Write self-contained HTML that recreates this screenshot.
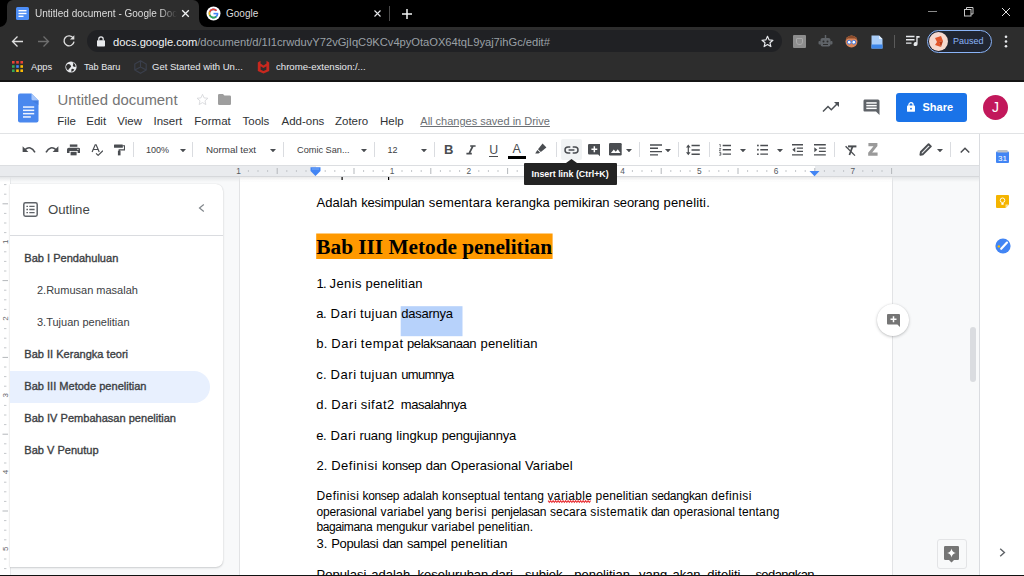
<!DOCTYPE html>
<html>
<head>
<meta charset="utf-8">
<style>
*{box-sizing:border-box;margin:0;padding:0}
html,body{width:1024px;height:576px;overflow:hidden;background:#fff;font-family:"Liberation Sans",sans-serif;}
.abs{position:absolute}
#root{position:relative;width:1024px;height:576px;overflow:hidden;background:#f8f9fa}
/* chrome */
#tabbar{left:0;top:0;width:1024px;height:27px;background:#000}
#tab1{left:7px;top:0;width:192px;height:27px;background:#2d2d2d;border-radius:6px 6px 0 0}
#navbar{left:0;top:27px;width:1024px;height:29px;background:#2d2d2d}
#bm{left:0;top:56px;width:1024px;height:25px;background:#2d2d2d}
#sep{left:0;top:80.4px;width:1024px;height:1.6px;background:#141414}
#pill{left:87px;top:30.3px;width:695px;height:22.2px;border-radius:11px;background:#202124}
.ct{color:#e8eaed;font-size:11px;white-space:nowrap;line-height:14px}
/* docs header */
#hdr{left:0;top:82px;width:1024px;height:52px;background:#fff}
#tb{left:0;top:133px;width:979px;height:32px;background:#fff;border-top:1px solid #e3e4e6}
.menu{color:#2f3235;font-size:11.5px;white-space:nowrap;line-height:14px;top:114px}
.tbt{color:#3c4043;font-size:9.5px;white-space:nowrap;line-height:12px;top:144px}
/* ruler */
#ruler{left:0;top:165px;width:979px;height:12px;background:#e9ebee;border-top:1px solid #dcdee1;border-bottom:1px solid #d6d8db}
/* doc */
#docbg{left:0;top:177px;width:979px;height:399px;background:#f8f9fa}
#page{left:239px;top:177px;width:654px;height:399px;background:#fff;border-left:1px solid #e2e3e5;border-right:1px solid #e2e3e5}
.dl{color:#000;white-space:nowrap;font-size:12.5px;line-height:16px;left:316px;transform-origin:0 0}
/* sidebar right */
#rside{left:979px;top:134px;width:45px;height:442px;background:#fff;border-left:1px solid #dadce0}
/* outline */
#outline{left:10px;top:183.5px;width:212.5px;height:383.5px;background:#fff;border-radius:0 7px 7px 0;box-shadow:0 1px 2px rgba(60,64,67,.22),0 0 1px rgba(60,64,67,.2)}
.ol{color:#3c4043;font-size:11.05px;white-space:nowrap;line-height:14px;-webkit-text-stroke:0.35px #3c4043}
.ol2{color:#3c4043;font-size:11px;white-space:nowrap;line-height:14px}
</style>
</head>
<body>
<div id="root">
<!-- CHROME -->
<div id="tabbar" class="abs"></div>
<div id="tab1" class="abs"></div>
<div id="navbar" class="abs"></div>
<div id="bm" class="abs"></div>
<div id="sep" class="abs"></div>
<div id="pill" class="abs"></div>

<!-- tab feet -->
<svg class="abs" style="left:-1px;top:19px" width="8" height="8"><path d="M0 8 H8 V0 A8 8 0 0 1 0 8Z" fill="#2d2d2d"/></svg>
<svg class="abs" style="left:199px;top:19px" width="8" height="8"><path d="M8 8 H0 V0 A8 8 0 0 0 8 8Z" fill="#2d2d2d"/></svg>
<!-- docs favicon -->
<svg class="abs" style="left:16px;top:7px" width="13" height="13" viewBox="0 0 13 13"><rect width="13" height="13" rx="1.5" fill="#4c8df6"/><rect x="2.5" y="3" width="8" height="1.4" fill="#fff"/><rect x="2.5" y="5.8" width="8" height="1.4" fill="#fff"/><rect x="2.5" y="8.6" width="5" height="1.4" fill="#fff"/></svg>
<div class="abs ct" style="left:35px;top:7px;color:#dcdcdc;font-size:10px;width:142px;overflow:hidden;-webkit-mask-image:linear-gradient(90deg,#000 125px,transparent 142px)">Untitled document - Google Docs</div>
<svg class="abs" style="left:181px;top:9px" width="9" height="9" viewBox="0 0 9 9"><path d="M1.2 1.2 L7.8 7.8 M7.8 1.2 L1.2 7.8" stroke="#f1f3f4" stroke-width="1.3" fill="none"/></svg>
<!-- google tab -->
<svg class="abs" style="left:206px;top:6px" width="15" height="15" viewBox="0 0 15 15"><circle cx="7.5" cy="7.5" r="7" fill="#fff"/><path d="M11.6 7.6 A4.1 4.1 0 1 1 10.4 4.6" fill="none" stroke="#4285f4" stroke-width="1.7"/><path d="M3.7 9.3 A4.1 4.1 0 0 1 3.7 5.7" fill="none" stroke="#fbbc05" stroke-width="1.7"/><path d="M3.7 5.8 A4.1 4.1 0 0 1 10.5 4.7" fill="none" stroke="#ea4335" stroke-width="1.7"/><path d="M3.7 9.2 A4.1 4.1 0 0 0 10.2 10.6" fill="none" stroke="#34a853" stroke-width="1.7"/><rect x="7.5" y="6.8" width="4.6" height="1.6" fill="#4285f4"/></svg>
<div class="abs ct" style="left:226px;top:7px;font-size:10px;color:#dcdcdc">Google</div>
<svg class="abs" style="left:373px;top:9px" width="9" height="9" viewBox="0 0 9 9"><path d="M1.5 1.5 L7.5 7.5 M7.5 1.5 L1.5 7.5" stroke="#e8eaed" stroke-width="1.1" fill="none"/></svg>
<div class="abs" style="left:389px;top:6px;width:1px;height:15px;background:#4a4a4a"></div>
<svg class="abs" style="left:401px;top:8px" width="12" height="12" viewBox="0 0 12 12"><path d="M6 1 V11 M1 6 H11" stroke="#f1f3f4" stroke-width="1.5" fill="none"/></svg>
<!-- window controls -->
<div class="abs" style="left:928px;top:11px;width:9px;height:1px;background:#8a8a8a"></div>
<svg class="abs" style="left:964px;top:7px" width="10" height="10" viewBox="0 0 10 10"><rect x="0.5" y="2.5" width="6.5" height="6.5" fill="none" stroke="#c8c8c8" stroke-width="1"/><path d="M2.5 2.5 V0.5 H9 V7 H7" fill="none" stroke="#c8c8c8" stroke-width="1"/></svg>
<svg class="abs" style="left:1001px;top:7px" width="10" height="10" viewBox="0 0 10 10"><path d="M1 1 L9 9 M9 1 L1 9" stroke="#e0e0e0" stroke-width="1" fill="none"/></svg>
<!-- nav icons -->
<svg class="abs" style="left:11px;top:35px" width="13" height="13" viewBox="0 0 13 13"><path d="M12 6.5 H1.8 M6.5 1.5 L1.5 6.5 L6.5 11.5" stroke="#dedede" stroke-width="1.3" fill="none"/></svg>
<svg class="abs" style="left:37px;top:35px" width="13" height="13" viewBox="0 0 13 13"><path d="M1 6.5 H11.2 M6.5 1.5 L11.5 6.5 L6.5 11.5" stroke="#6e6e6e" stroke-width="1.3" fill="none"/></svg>
<svg class="abs" style="left:62px;top:34px" width="14" height="14" viewBox="0 0 14 14"><path d="M11.3 4.2 A5 5 0 1 0 12 7.6" stroke="#dedede" stroke-width="1.4" fill="none"/><path d="M12.3 1.2 V5.6 H7.9 Z" fill="#dedede"/></svg>
<!-- lock -->
<svg class="abs" style="left:97px;top:36px" width="8" height="11" viewBox="0 0 8 11"><rect x="0" y="4.2" width="8" height="6.3" rx="0.8" fill="#e8eaed"/><path d="M1.8 4.5 V3 A2.2 2.2 0 0 1 6.2 3 V4.5" stroke="#e8eaed" stroke-width="1.2" fill="none"/></svg>
<div class="abs" style="left:113px;top:35px;font-size:11.2px;line-height:15px;white-space:nowrap;color:#f1f3f4;letter-spacing:-0.02px">docs.google.com<span style="color:#9aa0a6;letter-spacing:-0.03px">/document/d/1I1crwduvY72vGjIqC9KCv4pyOtaOX64tqL9yaj7ihGc/edit#</span></div>
<!-- star -->
<svg class="abs" style="left:761px;top:35px" width="13" height="13" viewBox="0 0 24 24"><path d="M12 2.5 L14.9 9 L22 9.7 L16.6 14.4 L18.2 21.4 L12 17.7 L5.8 21.4 L7.4 14.4 L2 9.7 L9.1 9 Z" fill="none" stroke="#e8eaed" stroke-width="2.2" stroke-linejoin="round"/></svg>
<!-- ext icons -->
<div class="abs" style="left:793px;top:35px;width:13px;height:13px;background:#8d8d8d;border-radius:1px"></div>
<div class="abs" style="left:796px;top:38px;width:7px;height:7px;border:1px solid #a9a9a9;border-radius:1px 1px 3px 3px"></div>
<svg class="abs" style="left:818px;top:34px" width="15" height="15" viewBox="0 0 15 15"><rect x="2.5" y="4" width="10" height="8.5" rx="2" fill="#5f6368"/><rect x="6.8" y="1" width="1.4" height="3.4" fill="#5f6368"/><rect x="0.5" y="7" width="2.4" height="3.5" rx="1" fill="#5f6368"/><rect x="12.1" y="7" width="2.4" height="3.5" rx="1" fill="#5f6368"/><circle cx="5.5" cy="7.5" r="1" fill="#2d2d2d"/><circle cx="9.5" cy="7.5" r="1" fill="#2d2d2d"/><rect x="5" y="10" width="5" height="1" fill="#2d2d2d"/></svg>
<svg class="abs" style="left:845px;top:35px" width="13" height="13" viewBox="0 0 13 13"><circle cx="6.5" cy="6.5" r="6" fill="#d9865a"/><path d="M0.8 5 A6 6 0 0 1 12.2 5 L10 3.5 H3Z" fill="#8a4b2b"/><circle cx="4.2" cy="7.2" r="1.9" fill="#fff" stroke="#3b74e0" stroke-width="1"/><circle cx="8.8" cy="7.2" r="1.9" fill="#fff" stroke="#3b74e0" stroke-width="1"/></svg>
<svg class="abs" style="left:871px;top:35px" width="12" height="14" viewBox="0 0 12 14"><path d="M0.5 0.5 H8 L11.5 4 V13.5 H0.5Z" fill="#a9cdf8"/><path d="M8 0.5 L11.5 4 H8Z" fill="#e3f0ff"/><rect x="0.5" y="9.5" width="11" height="4" fill="#3d86e8"/></svg>
<div class="abs" style="left:894px;top:35px;width:1px;height:13px;background:#5a5a5a"></div>
<svg class="abs" style="left:906px;top:35px" width="14" height="12" viewBox="0 0 14 12"><path d="M0 1.5 H8.5 M0 4.8 H8.5 M0 8.1 H5.5" stroke="#e8eaed" stroke-width="1.4" fill="none"/><path d="M10.3 1 H13.6 V2.8 H11.6 V9 A2 2 0 1 1 10.3 7.2Z" fill="#e8eaed"/></svg>
<!-- paused -->
<div class="abs" style="left:927px;top:30px;width:65px;height:23px;border-radius:12px;border:1px solid #8ab4f8;background:#202531"></div>
<div class="abs" style="left:929px;top:32px;width:19px;height:19px;border-radius:50%;background:#f6d9cf;overflow:hidden"><svg width="19" height="19" viewBox="0 0 19 19"><path d="M6 6 L12 4 L14 9 L10 10 L12 15 L6 13 L8 10Z" fill="#e2562c"/><path d="M10 10 L14 9 L12 15Z" fill="#b83a17"/></svg></div>
<div class="abs" style="left:953px;top:35px;font-size:9px;line-height:12px;color:#8ab4f8;white-space:nowrap">Paused</div>
<svg class="abs" style="left:1004px;top:35px" width="4" height="13" viewBox="0 0 4 13"><circle cx="2" cy="1.8" r="1.3" fill="#e8eaed"/><circle cx="2" cy="6.5" r="1.3" fill="#e8eaed"/><circle cx="2" cy="11.2" r="1.3" fill="#e8eaed"/></svg>
<!-- bookmarks -->
<svg class="abs" style="left:12px;top:61px" width="11" height="11" viewBox="0 0 11 11"><rect x="0" y="0" width="2.6" height="2.6" fill="#ea4335"/><rect x="4.2" y="0" width="2.6" height="2.6" fill="#ea4335"/><rect x="8.4" y="0" width="2.6" height="2.6" fill="#ea4335"/><rect x="0" y="4.2" width="2.6" height="2.6" fill="#34a853"/><rect x="4.2" y="4.2" width="2.6" height="2.6" fill="#4285f4"/><rect x="8.4" y="4.2" width="2.6" height="2.6" fill="#fbbc05"/><rect x="0" y="8.4" width="2.6" height="2.6" fill="#34a853"/><rect x="4.2" y="8.4" width="2.6" height="2.6" fill="#fbbc05"/><rect x="8.4" y="8.4" width="2.6" height="2.6" fill="#fbbc05"/></svg>
<div class="abs ct" style="left:31px;top:60px;font-size:9.3px">Apps</div>
<svg class="abs" style="left:65px;top:61px" width="12" height="12" viewBox="0 0 12 12"><circle cx="6" cy="6" r="5.6" fill="#e8eaed"/><path d="M2 3.5 Q4 2.5 5.5 4 T5 7 Q3.5 7.5 3.2 9.5 Q1 8 1 5.5Z M7.5 1 Q9 2.5 8 4 T10.5 6 Q10.8 3 7.5 1Z M6.5 8 Q8 7.5 9.3 8.8 Q8 10.6 6.2 10.8Z" fill="#2d2d2d"/></svg>
<div class="abs ct" style="left:84px;top:60px;font-size:9.1px">Tab Baru</div>
<svg class="abs" style="left:134px;top:60px" width="13" height="14" viewBox="0 0 13 14"><path d="M6.5 0.8 L12.2 4 V10 L6.5 13.2 L0.8 10 V4Z M6.5 0.8 V7 M0.8 10 L6.5 7 L12.2 10" fill="none" stroke="#3a3f4c" stroke-width="1.2"/></svg>
<div class="abs ct" style="left:152px;top:60px;font-size:9.5px">Get Started with Un...</div>
<svg class="abs" style="left:257px;top:60px" width="13" height="14" viewBox="0 0 13 14"><path d="M0.8 2.5 L3.5 0.8 V3.6 L6.5 5.4 L9.5 3.6 V0.8 L12.2 2.5 V11 L6.5 13.4 L0.8 11Z M3.6 6.2 V9.8 L6.5 11 L9.4 9.8 V6.2 L6.5 8Z" fill="#c8281e" fill-rule="evenodd"/></svg>
<div class="abs ct" style="left:276px;top:60px;font-size:9.6px">chrome-extension:/...</div>
<!-- DOCS -->
<div id="hdr" class="abs"></div>
<div id="tb" class="abs"></div>
<div id="ruler" class="abs"></div>
<div id="docbg" class="abs"></div>
<div id="page" class="abs"></div>
<div class="abs" style="left:316px;top:166px;width:499px;height:10px;background:#fff"></div>
<svg class="abs" style="left:0;top:0" width="1024" height="180" viewBox="0 0 1024 180"><text x="238.5" y="173.8" font-size="8.3" fill="#55595e" text-anchor="middle" font-family="Liberation Sans">1</text><rect x="247.9" y="170" width="1" height="2" fill="#c4c7ca"/><rect x="257.5" y="170" width="1" height="2" fill="#c4c7ca"/><rect x="267.1" y="170" width="1" height="2" fill="#c4c7ca"/><rect x="276.7" y="168" width="1" height="6" fill="#b4b7bb"/><rect x="286.3" y="170" width="1" height="2" fill="#c4c7ca"/><rect x="295.9" y="170" width="1" height="2" fill="#c4c7ca"/><rect x="305.5" y="170" width="1" height="2" fill="#c4c7ca"/><rect x="324.7" y="170" width="1" height="2" fill="#c4c7ca"/><rect x="334.3" y="170" width="1" height="2" fill="#c4c7ca"/><rect x="343.9" y="170" width="1" height="2" fill="#c4c7ca"/><rect x="353.5" y="168" width="1" height="6" fill="#b4b7bb"/><rect x="363.1" y="170" width="1" height="2" fill="#c4c7ca"/><rect x="372.7" y="170" width="1" height="2" fill="#c4c7ca"/><rect x="382.3" y="170" width="1" height="2" fill="#c4c7ca"/><text x="392.1" y="173.8" font-size="8.3" fill="#55595e" text-anchor="middle" font-family="Liberation Sans">1</text><rect x="401.5" y="170" width="1" height="2" fill="#c4c7ca"/><rect x="411.1" y="170" width="1" height="2" fill="#c4c7ca"/><rect x="420.7" y="170" width="1" height="2" fill="#c4c7ca"/><rect x="430.3" y="168" width="1" height="6" fill="#b4b7bb"/><rect x="439.9" y="170" width="1" height="2" fill="#c4c7ca"/><rect x="449.5" y="170" width="1" height="2" fill="#c4c7ca"/><rect x="459.1" y="170" width="1" height="2" fill="#c4c7ca"/><text x="468.9" y="173.8" font-size="8.3" fill="#55595e" text-anchor="middle" font-family="Liberation Sans">2</text><rect x="478.3" y="170" width="1" height="2" fill="#c4c7ca"/><rect x="487.9" y="170" width="1" height="2" fill="#c4c7ca"/><rect x="497.5" y="170" width="1" height="2" fill="#c4c7ca"/><rect x="507.1" y="168" width="1" height="6" fill="#b4b7bb"/><rect x="516.7" y="170" width="1" height="2" fill="#c4c7ca"/><rect x="526.3" y="170" width="1" height="2" fill="#c4c7ca"/><rect x="535.9" y="170" width="1" height="2" fill="#c4c7ca"/><text x="545.7" y="173.8" font-size="8.3" fill="#55595e" text-anchor="middle" font-family="Liberation Sans">3</text><rect x="555.1" y="170" width="1" height="2" fill="#c4c7ca"/><rect x="564.7" y="170" width="1" height="2" fill="#c4c7ca"/><rect x="574.3" y="170" width="1" height="2" fill="#c4c7ca"/><rect x="583.9" y="168" width="1" height="6" fill="#b4b7bb"/><rect x="593.5" y="170" width="1" height="2" fill="#c4c7ca"/><rect x="603.1" y="170" width="1" height="2" fill="#c4c7ca"/><rect x="612.7" y="170" width="1" height="2" fill="#c4c7ca"/><text x="622.5" y="173.8" font-size="8.3" fill="#55595e" text-anchor="middle" font-family="Liberation Sans">4</text><rect x="631.9" y="170" width="1" height="2" fill="#c4c7ca"/><rect x="641.5" y="170" width="1" height="2" fill="#c4c7ca"/><rect x="651.1" y="170" width="1" height="2" fill="#c4c7ca"/><rect x="660.7" y="168" width="1" height="6" fill="#b4b7bb"/><rect x="670.3" y="170" width="1" height="2" fill="#c4c7ca"/><rect x="679.9" y="170" width="1" height="2" fill="#c4c7ca"/><rect x="689.5" y="170" width="1" height="2" fill="#c4c7ca"/><text x="699.3" y="173.8" font-size="8.3" fill="#55595e" text-anchor="middle" font-family="Liberation Sans">5</text><rect x="708.7" y="170" width="1" height="2" fill="#c4c7ca"/><rect x="718.3" y="170" width="1" height="2" fill="#c4c7ca"/><rect x="727.9" y="170" width="1" height="2" fill="#c4c7ca"/><rect x="737.5" y="168" width="1" height="6" fill="#b4b7bb"/><rect x="747.1" y="170" width="1" height="2" fill="#c4c7ca"/><rect x="756.7" y="170" width="1" height="2" fill="#c4c7ca"/><rect x="766.3" y="170" width="1" height="2" fill="#c4c7ca"/><text x="776.1" y="173.8" font-size="8.3" fill="#55595e" text-anchor="middle" font-family="Liberation Sans">6</text><rect x="785.5" y="170" width="1" height="2" fill="#c4c7ca"/><rect x="795.1" y="170" width="1" height="2" fill="#c4c7ca"/><rect x="804.7" y="170" width="1" height="2" fill="#c4c7ca"/><rect x="814.3" y="168" width="1" height="6" fill="#b4b7bb"/><rect x="823.9" y="170" width="1" height="2" fill="#c4c7ca"/><rect x="833.5" y="170" width="1" height="2" fill="#c4c7ca"/><rect x="843.1" y="170" width="1" height="2" fill="#c4c7ca"/><text x="852.9" y="173.8" font-size="8.3" fill="#55595e" text-anchor="middle" font-family="Liberation Sans">7</text><rect x="862.3" y="170" width="1" height="2" fill="#c4c7ca"/><rect x="871.9" y="170" width="1" height="2" fill="#c4c7ca"/><rect x="881.5" y="170" width="1" height="2" fill="#c4c7ca"/><rect x="891.1" y="168" width="1" height="6" fill="#b4b7bb"/><path d="M310.5 167.2 H320.5 V171 L315.5 176 L310.5 171Z" fill="#4285f4"/><rect x="312" y="168.6" width="7" height="0.8" fill="#8ab4f8"/><path d="M809.5 171 H819.5 L814.5 176.2Z" fill="#4285f4"/></svg>
<div class="abs" style="left:0;top:177px;width:10px;height:399px;background:#fff"></div>
<svg class="abs" style="left:0;top:0.6px" width="12" height="576" viewBox="0 0 12 576"><rect x="4" y="183.1" width="2.4" height="1" fill="#c4c7ca"/><rect x="4" y="192.7" width="2.4" height="1" fill="#c4c7ca"/><rect x="2.5" y="202.3" width="5.5" height="1" fill="#b4b7bb"/><rect x="4" y="211.9" width="2.4" height="1" fill="#c4c7ca"/><rect x="4" y="221.5" width="2.4" height="1" fill="#c4c7ca"/><rect x="4" y="231.1" width="2.4" height="1" fill="#c4c7ca"/><text transform="translate(7.6,240.7) rotate(-90)" font-size="8" fill="#5f6368" text-anchor="middle" font-family="Liberation Sans">1</text><rect x="4" y="250.3" width="2.4" height="1" fill="#c4c7ca"/><rect x="4" y="259.9" width="2.4" height="1" fill="#c4c7ca"/><rect x="4" y="269.5" width="2.4" height="1" fill="#c4c7ca"/><rect x="2.5" y="279.1" width="5.5" height="1" fill="#b4b7bb"/><rect x="4" y="288.7" width="2.4" height="1" fill="#c4c7ca"/><rect x="4" y="298.3" width="2.4" height="1" fill="#c4c7ca"/><rect x="4" y="307.9" width="2.4" height="1" fill="#c4c7ca"/><text transform="translate(7.6,317.5) rotate(-90)" font-size="8" fill="#5f6368" text-anchor="middle" font-family="Liberation Sans">2</text><rect x="4" y="327.1" width="2.4" height="1" fill="#c4c7ca"/><rect x="4" y="336.7" width="2.4" height="1" fill="#c4c7ca"/><rect x="4" y="346.3" width="2.4" height="1" fill="#c4c7ca"/><rect x="2.5" y="355.9" width="5.5" height="1" fill="#b4b7bb"/><rect x="4" y="365.5" width="2.4" height="1" fill="#c4c7ca"/><rect x="4" y="375.1" width="2.4" height="1" fill="#c4c7ca"/><rect x="4" y="384.7" width="2.4" height="1" fill="#c4c7ca"/><text transform="translate(7.6,394.3) rotate(-90)" font-size="8" fill="#5f6368" text-anchor="middle" font-family="Liberation Sans">3</text><rect x="4" y="403.9" width="2.4" height="1" fill="#c4c7ca"/><rect x="4" y="413.5" width="2.4" height="1" fill="#c4c7ca"/><rect x="4" y="423.1" width="2.4" height="1" fill="#c4c7ca"/><rect x="2.5" y="432.7" width="5.5" height="1" fill="#b4b7bb"/><rect x="4" y="442.3" width="2.4" height="1" fill="#c4c7ca"/><rect x="4" y="451.9" width="2.4" height="1" fill="#c4c7ca"/><rect x="4" y="461.5" width="2.4" height="1" fill="#c4c7ca"/><text transform="translate(7.6,471.1) rotate(-90)" font-size="8" fill="#5f6368" text-anchor="middle" font-family="Liberation Sans">4</text><rect x="4" y="480.7" width="2.4" height="1" fill="#c4c7ca"/><rect x="4" y="490.3" width="2.4" height="1" fill="#c4c7ca"/><rect x="4" y="499.9" width="2.4" height="1" fill="#c4c7ca"/><rect x="2.5" y="509.5" width="5.5" height="1" fill="#b4b7bb"/><rect x="4" y="519.1" width="2.4" height="1" fill="#c4c7ca"/><rect x="4" y="528.7" width="2.4" height="1" fill="#c4c7ca"/><rect x="4" y="538.3" width="2.4" height="1" fill="#c4c7ca"/><text transform="translate(7.6,547.9) rotate(-90)" font-size="8" fill="#5f6368" text-anchor="middle" font-family="Liberation Sans">5</text><rect x="4" y="557.5" width="2.4" height="1" fill="#c4c7ca"/><rect x="4" y="567.1" width="2.4" height="1" fill="#c4c7ca"/></svg>
<div class="abs" style="left:10px;top:177px;width:1px;height:399px;background:#e6e8ea"></div>
<div id="rside" class="abs"></div>
<div class="abs" style="left:0;top:133px;width:1024px;height:1px;background:#e1e3e5"></div>
<!-- docs logo -->
<svg class="abs" style="left:18px;top:93px" width="21" height="30" viewBox="0 0 21 30"><path d="M2 0.5 H13.5 L20.5 7.5 V27.5 Q20.5 29.5 18.5 29.5 H2 Q0 29.5 0 27.5 V2.5 Q0 0.5 2 0.5Z" fill="#4a88ee"/><path d="M13.5 0.5 L20.5 7.5 H15 Q13.5 7.5 13.5 6Z" fill="#a8c7fa"/><path d="M13.5 7.5 H20.5 V12 Z" fill="#3f78d8" opacity=".6"/><rect x="5" y="13.3" width="11.2" height="1.5" fill="#f1f6ff"/><rect x="5" y="16.6" width="11.2" height="1.5" fill="#f1f6ff"/><rect x="5" y="19.9" width="11.2" height="1.5" fill="#f1f6ff"/><rect x="5" y="23.2" width="7.8" height="1.5" fill="#f1f6ff"/></svg>
<div class="abs" style="left:57.5px;top:90.5px;font-size:14.9px;line-height:18px;color:#757575;white-space:nowrap">Untitled document</div>
<svg class="abs" style="left:196px;top:93px" width="13" height="13" viewBox="0 0 24 24"><path d="M12 2.5 L14.9 9 L22 9.7 L16.6 14.4 L18.2 21.4 L12 17.7 L5.8 21.4 L7.4 14.4 L2 9.7 L9.1 9 Z" fill="none" stroke="#d5d7da" stroke-width="1.6" stroke-linejoin="round"/></svg>
<svg class="abs" style="left:218px;top:94px" width="13" height="11" viewBox="0 0 13 11"><path d="M0 1.2 Q0 0 1.2 0 H5 L6.4 1.5 H11.8 Q13 1.5 13 2.7 V9.8 Q13 11 11.8 11 H1.2 Q0 11 0 9.8Z" fill="#9e9e9e"/></svg>
<div class="abs menu" style="left:57.3px">File</div>
<div class="abs menu" style="left:86.3px">Edit</div>
<div class="abs menu" style="left:117.3px">View</div>
<div class="abs menu" style="left:153.5px">Insert</div>
<div class="abs menu" style="left:194.3px">Format</div>
<div class="abs menu" style="left:242.5px">Tools</div>
<div class="abs menu" style="left:281.5px">Add-ons</div>
<div class="abs menu" style="left:335px">Zotero</div>
<div class="abs menu" style="left:380px">Help</div>
<div class="abs menu" style="left:420.3px;font-size:11px;color:#6b6f74;text-decoration:underline">All changes saved in Drive</div>
<!-- toolbar -->
<svg class="abs" style="left:22px;top:144px" width="14" height="11" viewBox="0 0 14 11"><path d="M3 5.6 Q8.5 1 13 8.3" fill="none" stroke="#4a4d51" stroke-width="1.6"/><path d="M0.6 2.2 V8 H6.4Z" fill="#4a4d51"/></svg>
<svg class="abs" style="left:45px;top:144px" width="14" height="11" viewBox="0 0 14 11"><path d="M11 5.6 Q5.5 1 1 8.3" fill="none" stroke="#4a4d51" stroke-width="1.6"/><path d="M13.4 2.2 V8 H7.6Z" fill="#4a4d51"/></svg>
<svg class="abs" style="left:67.3px;top:144.2px" width="13.2" height="11.8" viewBox="0 0 14 13" preserveAspectRatio="none"><rect x="3" y="0.5" width="8" height="2.6" fill="#4a4d51"/><path d="M2 4 H12 Q14 4 14 6 V10 H11.3 V7.6 H2.7 V10 H0 V6 Q0 4 2 4Z" fill="#4a4d51"/><rect x="3.8" y="8.6" width="6.4" height="3.9" fill="#4a4d51"/><circle cx="11.6" cy="5.8" r="0.7" fill="#fff"/></svg>
<svg class="abs" style="left:90.5px;top:144px" width="12.8" height="12.4" viewBox="0 0 14 14" preserveAspectRatio="none"><path d="M1.2 9 L4.6 0.8 H5.6 L9 9 M2.5 6.2 H7.7" fill="none" stroke="#4a4d51" stroke-width="1.3"/><path d="M5.5 10.5 L7.8 12.8 L13 7.6" fill="none" stroke="#4a4d51" stroke-width="1.3"/></svg>
<svg class="abs" style="left:113.7px;top:144.4px" width="11.2" height="11.8" viewBox="0 0 12 14" preserveAspectRatio="none"><rect x="0" y="0.5" width="9.5" height="4" rx="0.6" fill="#4a4d51"/><path d="M9.5 2 H11.3 V7 H5.6 V8.5" fill="none" stroke="#4a4d51" stroke-width="1.3"/><rect x="4.2" y="8" width="2.8" height="5.5" fill="#4a4d51"/></svg>
<div class="abs" style="left:133px;top:142px;width:1px;height:15px;background:#dadce0"></div>
<div class="abs tbt" style="left:146px;font-size:9px">100%</div>
<svg class="abs" style="left:180.4px;top:148.7px" width="6" height="3.3" viewBox="0 0 7 4" preserveAspectRatio="none"><path d="M0 0 H7 L3.5 4Z" fill="#4a4d51"/></svg>
<div class="abs" style="left:192px;top:142px;width:1px;height:15px;background:#dadce0"></div>
<div class="abs tbt" style="left:206px;font-size:9.8px">Normal text</div>
<svg class="abs" style="left:270.4px;top:148.7px" width="6" height="3.3" viewBox="0 0 7 4" preserveAspectRatio="none"><path d="M0 0 H7 L3.5 4Z" fill="#4a4d51"/></svg>
<div class="abs" style="left:283px;top:142px;width:1px;height:15px;background:#dadce0"></div>
<div class="abs tbt" style="left:297px;font-size:9.2px">Comic San...</div>
<svg class="abs" style="left:361.4px;top:148.7px" width="6" height="3.3" viewBox="0 0 7 4" preserveAspectRatio="none"><path d="M0 0 H7 L3.5 4Z" fill="#4a4d51"/></svg>
<div class="abs" style="left:374px;top:142px;width:1px;height:15px;background:#dadce0"></div>
<div class="abs tbt" style="left:387.5px;font-size:9px">12</div>
<svg class="abs" style="left:421.4px;top:148.7px" width="6" height="3.3" viewBox="0 0 7 4" preserveAspectRatio="none"><path d="M0 0 H7 L3.5 4Z" fill="#4a4d51"/></svg>
<div class="abs" style="left:434px;top:142px;width:1px;height:15px;background:#dadce0"></div>
<div class="abs" style="left:444px;top:142px;font-size:13px;line-height:16px;font-weight:bold;color:#4a4d51">B</div>
<svg class="abs" style="left:466px;top:145px" width="10" height="10" viewBox="0 0 10 10"><path d="M4.2 1 H9.6 M0.4 8.7 H5.8 M6.9 1 L3.1 8.7" fill="none" stroke="#4a4d51" stroke-width="1.7"/></svg>
<div class="abs" style="left:489.2px;top:143px;font-size:12.3px;line-height:15px;color:#4a4d51">U</div><div class="abs" style="left:489px;top:155.8px;width:9.3px;height:1px;background:#4a4d51"></div>
<div class="abs" style="left:512.5px;top:142px;font-size:12.5px;line-height:15px;color:#4a4d51">A</div>
<div class="abs" style="left:508.2px;top:156.4px;width:17.5px;height:3px;background:#000"></div>
<svg class="abs" style="left:534.4px;top:142.8px" width="13" height="12" viewBox="0 0 13 12"><path d="M8.6 0.6 L12.4 4.4 L6.8 9 L4 6.2Z" fill="#4a4d51"/><path d="M3.4 6.9 L6.1 9.6 L4.4 10.6 H1.2Z" fill="#4a4d51"/></svg>
<div class="abs" style="left:556px;top:142px;width:1px;height:15px;background:#dadce0"></div>
<div class="abs" style="left:561px;top:139px;width:21px;height:21px;border-radius:2px;background:#f1f3f4"></div>
<svg class="abs" style="left:564px;top:146px" width="15" height="8" viewBox="0 0 15 8"><path d="M6.3 1 H4 A3 3 0 0 0 4 7 H6.3 M8.7 1 H11 A3 3 0 0 1 11 7 H8.7 M4.6 4 H10.4" fill="none" stroke="#4a4d51" stroke-width="1.5"/></svg>
<svg class="abs" style="left:587.5px;top:143.6px" width="12.7" height="13" viewBox="0 0 13 13" preserveAspectRatio="none"><path d="M1.2 0 H11.8 Q13 0 13 1.2 V13 L10.4 10.4 H1.2 Q0 10.4 0 9.2 V1.2 Q0 0 1.2 0Z" fill="#4a4d51"/><path d="M6.5 2.2 V8.2 M3.5 5.2 H9.5" stroke="#fff" stroke-width="1.5"/></svg>
<svg class="abs" style="left:609px;top:143.4px" width="12.7" height="12.5" viewBox="0 0 12 12" preserveAspectRatio="none"><rect width="12" height="12" rx="1.2" fill="#4a4d51"/><path d="M1.8 9.6 L4.5 6.2 L6.4 8.5 L8.3 6 L10.8 9.6Z" fill="#fff"/></svg>
<svg class="abs" style="left:626.4px;top:148.7px" width="6" height="3.3" viewBox="0 0 7 4" preserveAspectRatio="none"><path d="M0 0 H7 L3.5 4Z" fill="#4a4d51"/></svg>
<div class="abs" style="left:639px;top:142px;width:1px;height:15px;background:#dadce0"></div>
<svg class="abs" style="left:649.5px;top:144px" width="12" height="12" viewBox="0 0 12 12"><path d="M0 1 H12 M0 4.3 H8 M0 7.6 H12 M0 10.9 H8" stroke="#4a4d51" stroke-width="1.4"/></svg>
<svg class="abs" style="left:664.9px;top:148.7px" width="6" height="3.3" viewBox="0 0 7 4" preserveAspectRatio="none"><path d="M0 0 H7 L3.5 4Z" fill="#4a4d51"/></svg>
<div class="abs" style="left:678px;top:142px;width:1px;height:15px;background:#dadce0"></div>
<svg class="abs" style="left:686.4px;top:144.2px" width="13.8" height="11.8" viewBox="0 0 15 12" preserveAspectRatio="none"><path d="M6 1.5 H15 M6 6 H15 M6 10.5 H15" stroke="#4a4d51" stroke-width="1.5"/><path d="M2.5 1.8 V10.2" stroke="#4a4d51" stroke-width="1.3"/><path d="M0 3.6 L2.5 0.6 L5 3.6Z M0 8.4 L2.5 11.4 L5 8.4Z" fill="#4a4d51"/></svg>
<div class="abs" style="left:709px;top:142px;width:1px;height:15px;background:#dadce0"></div>
<svg class="abs" style="left:718.8px;top:144.2px" width="12" height="11.6" viewBox="0 0 13 12" preserveAspectRatio="none"><path d="M4 1.5 H13 M4 6 H13 M4 10.5 H13" stroke="#4a4d51" stroke-width="1.5"/><path d="M0.3 0.4 H1.4 V3 M0.2 4.6 H2 L0.2 7 H2.1 M0.2 8.8 H2 V11.6 H0.2 M0.8 10.2 H2" fill="none" stroke="#4a4d51" stroke-width="0.8"/></svg>
<svg class="abs" style="left:739.9px;top:148.7px" width="6" height="3.3" viewBox="0 0 7 4" preserveAspectRatio="none"><path d="M0 0 H7 L3.5 4Z" fill="#4a4d51"/></svg>
<svg class="abs" style="left:756.6px;top:144.2px" width="11" height="11.6" viewBox="0 0 12 12" preserveAspectRatio="none"><path d="M3.6 1.5 H12 M3.6 6 H12 M3.6 10.5 H12" stroke="#4a4d51" stroke-width="1.5"/><circle cx="1" cy="1.5" r="1" fill="#4a4d51"/><circle cx="1" cy="6" r="1" fill="#4a4d51"/><circle cx="1" cy="10.5" r="1" fill="#4a4d51"/></svg>
<svg class="abs" style="left:776.9px;top:148.7px" width="6" height="3.3" viewBox="0 0 7 4" preserveAspectRatio="none"><path d="M0 0 H7 L3.5 4Z" fill="#4a4d51"/></svg>
<svg class="abs" style="left:791.8px;top:144.2px" width="11.5" height="11.6" viewBox="0 0 12 12" preserveAspectRatio="none"><path d="M0 0.8 H12 M5 4.3 H12 M5 7.7 H12 M0 11.2 H12" stroke="#4a4d51" stroke-width="1.4"/><path d="M3.4 3.4 V8.6 L0.3 6Z" fill="#4a4d51"/></svg>
<svg class="abs" style="left:814px;top:144.2px" width="11.8" height="11.6" viewBox="0 0 12 12" preserveAspectRatio="none"><path d="M0 0.8 H12 M5 4.3 H12 M5 7.7 H12 M0 11.2 H12" stroke="#4a4d51" stroke-width="1.4"/><path d="M0.3 3.4 V8.6 L3.4 6Z" fill="#4a4d51"/></svg>
<div class="abs" style="left:834px;top:142px;width:1px;height:15px;background:#dadce0"></div>
<svg class="abs" style="left:844.5px;top:144.6px" width="12" height="11" viewBox="0 0 12 11"><path d="M3 1.4 H11.4" stroke="#4a4d51" stroke-width="2"/><path d="M7.6 1.4 L4.4 10" stroke="#4a4d51" stroke-width="1.7"/><path d="M0.6 1.2 L10 10.6" stroke="#4a4d51" stroke-width="1.3"/></svg>
<svg class="abs" style="left:867.6px;top:143.2px" width="10" height="12.8" viewBox="0 0 12 13" preserveAspectRatio="none"><path d="M0.5 0 H11.3 V3 L5 9.6 H11.5 V13 H0.2 V10 L6.6 3.4 H0.5Z" fill="#9a9a9a"/></svg>
<svg class="abs" style="left:919px;top:143px" width="13" height="13" viewBox="0 0 13 13"><path d="M9.6 1.2 L11.8 3.4 L4 11.2 L1.4 11.8 L1.9 9Z" fill="#e8eaed" stroke="#4a4d51" stroke-width="1.9" stroke-linejoin="round"/></svg>
<svg class="abs" style="left:936.9px;top:148.7px" width="6" height="3.3" viewBox="0 0 7 4" preserveAspectRatio="none"><path d="M0 0 H7 L3.5 4Z" fill="#4a4d51"/></svg>
<div class="abs" style="left:950px;top:142px;width:1px;height:15px;background:#dadce0"></div>
<svg class="abs" style="left:960.2px;top:146.6px" width="10" height="6.2" viewBox="0 0 11 7" preserveAspectRatio="none"><path d="M0.8 6.2 L5.5 1.4 L10.2 6.2" fill="none" stroke="#4a4d51" stroke-width="1.6"/></svg>
<!-- header right -->
<svg class="abs" style="left:822px;top:101px" width="18" height="12" viewBox="0 0 18 12"><path d="M1 10.5 L6 5.5 L9.3 8.8 L16 2" fill="none" stroke="#4d5156" stroke-width="1.5"/><path d="M12 1 H17 V6Z" fill="#4d5156"/></svg>
<svg class="abs" style="left:863px;top:99px" width="17" height="17" viewBox="0 0 17 17"><path d="M1.5 0.5 H15 Q16.5 0.5 16.5 2 V16 L13 12.5 H1.5 Q0.5 12.5 0.5 11.5 V2 Q0.5 0.5 1.5 0.5Z" fill="#5f6368"/><rect x="3.3" y="3.2" width="10.4" height="1.5" fill="#fff"/><rect x="3.3" y="5.9" width="10.4" height="1.5" fill="#fff"/><rect x="3.3" y="8.6" width="10.4" height="1.5" fill="#fff"/></svg>
<div class="abs" style="left:896px;top:93px;width:71px;height:29px;border-radius:3px;background:#1a73e8"></div>
<svg class="abs" style="left:907px;top:102px" width="8" height="10" viewBox="0 0 8 10"><rect x="0" y="3.6" width="8" height="6.2" rx="0.9" fill="#fff"/><path d="M1.9 4 V2.8 A2.1 2.1 0 0 1 6.1 2.8 V4" stroke="#fff" stroke-width="1.2" fill="none"/><circle cx="4" cy="6.7" r="0.9" fill="#1a73e8"/></svg>
<div class="abs" style="left:922.5px;top:100px;font-size:11px;line-height:14px;font-weight:bold;color:#fff;white-space:nowrap">Share</div>
<div class="abs" style="left:983px;top:95px;width:25px;height:25px;border-radius:50%;background:#c2185b;color:#fff;font-size:14px;line-height:25px;text-align:center">J</div>

<div class="abs" style="left:0;top:177px;width:979px;height:5px;background:linear-gradient(#e4e6e8,rgba(248,249,250,0))"></div>
<div class="abs" style="left:240px;top:177px;width:652px;height:4px;background:linear-gradient(#ececec,#fff)"></div>
<div id="outline" class="abs"></div>
<svg class="abs" style="left:23px;top:202px" width="15" height="15" viewBox="0 0 15 15"><rect x="0.8" y="0.8" width="13.4" height="13.4" rx="1.6" fill="none" stroke="#5f6368" stroke-width="1.5"/><path d="M3.4 4.4 H5 M6.3 4.4 H11.6 M3.4 7.5 H5 M6.3 7.5 H11.6 M3.4 10.6 H5 M6.3 10.6 H11.6" stroke="#5f6368" stroke-width="1.4"/></svg>
<div class="abs" style="left:48px;top:201.8px;font-size:13.2px;line-height:16px;color:#444746;white-space:nowrap">Outline</div>
<svg class="abs" style="left:198px;top:204px" width="7" height="8" viewBox="0 0 7 8"><path d="M5.8 0.5 L1.5 4 L5.8 7.5" fill="none" stroke="#80868b" stroke-width="1.2"/></svg>
<div class="abs" style="left:10px;top:235px;width:212.5px;height:1px;background:#dadce0"></div>
<div class="abs" style="left:10px;top:370.5px;width:200px;height:32px;background:#e8f0fe;border-radius:0 16px 16px 0"></div>
<div class="abs ol" style="left:24.3px;top:250.5px">Bab I Pendahuluan</div>
<div class="abs ol2" style="left:37px;top:282.5px">2.Rumusan masalah</div>
<div class="abs ol2" style="left:37px;top:314.5px">3.Tujuan penelitian</div>
<div class="abs ol" style="left:24.3px;top:346.5px">Bab II Kerangka teori</div>
<div class="abs ol" style="left:24.3px;top:378.5px">Bab III Metode penelitian</div>
<div class="abs ol" style="left:24.3px;top:410.5px">Bab IV Pembahasan penelitian</div>
<div class="abs ol" style="left:24.3px;top:442.5px">Bab V Penutup</div>

<svg class="abs" style="left:0;top:0" width="1024" height="576" viewBox="0 0 1024 576" font-family="Liberation Sans" fill="#000">
<rect x="341.5" y="177" width="1.2" height="3" fill="#000"/><rect x="388" y="177" width="1.2" height="3" fill="#000"/>
<rect x="316.2" y="233.5" width="236.4" height="25.5" fill="#ff9900"/>
<text x="316.3" y="254" font-family="Liberation Serif" font-weight="bold" font-size="21.3" textLength="235.8" lengthAdjust="spacing">Bab III Metode penelitian</text>
<rect x="400.7" y="306.2" width="61.8" height="30" fill="#b7d2fb"/>
<text y="207.25" font-size="13"><tspan x="316.5" textLength="40.85" lengthAdjust="spacing">Adalah</tspan><tspan x="361.25" textLength="63.60" lengthAdjust="spacing">kesimpulan</tspan><tspan x="428.75" textLength="63.10" lengthAdjust="spacing">sementara</tspan><tspan x="495.75" textLength="54.10" lengthAdjust="spacing">kerangka</tspan><tspan x="553.75" textLength="55.85" lengthAdjust="spacing">pemikiran</tspan><tspan x="613.5" textLength="46.10" lengthAdjust="spacing">seorang</tspan><tspan x="663.5" textLength="46.25" lengthAdjust="spacing">peneliti.</tspan></text>
<text y="287.75" font-size="13"><tspan x="316.5" textLength="10.08" lengthAdjust="spacing">1.</tspan><tspan x="329.5" textLength="32.10" lengthAdjust="spacing">Jenis</tspan><tspan x="365.5" textLength="57.00" lengthAdjust="spacing">penelitian</tspan></text>
<text y="318" font-size="13"><tspan x="316.25" textLength="10.35" lengthAdjust="spacing">a.</tspan><tspan x="330.5" textLength="25.60" lengthAdjust="spacing">Dari</tspan><tspan x="360" textLength="37.35" lengthAdjust="spacing">tujuan</tspan><tspan x="401.25" textLength="51.75" lengthAdjust="spacing">dasarnya</tspan></text>
<text y="348.25" font-size="13"><tspan x="316.25" textLength="11.10" lengthAdjust="spacing">b.</tspan><tspan x="331.25" textLength="25.60" lengthAdjust="spacing">Dari</tspan><tspan x="360.75" textLength="42.35" lengthAdjust="spacing">tempat</tspan><tspan x="407" textLength="69.60" lengthAdjust="spacing">pelaksanaan</tspan><tspan x="480.5" textLength="57.00" lengthAdjust="spacing">penelitian</tspan></text>
<text y="378.75" font-size="13"><tspan x="316.25" textLength="10.35" lengthAdjust="spacing">c.</tspan><tspan x="330.5" textLength="25.60" lengthAdjust="spacing">Dari</tspan><tspan x="360" textLength="37.35" lengthAdjust="spacing">tujuan</tspan><tspan x="401.25" textLength="53.08" lengthAdjust="spacing">umumnya</tspan></text>
<text y="409.25" font-size="13"><tspan x="316.25" textLength="11.10" lengthAdjust="spacing">d.</tspan><tspan x="331.25" textLength="25.60" lengthAdjust="spacing">Dari</tspan><tspan x="360.75" textLength="33.56" lengthAdjust="spacing">sifat2</tspan><tspan x="400.75" textLength="66.00" lengthAdjust="spacing">masalahnya</tspan></text>
<text y="439.5" font-size="13"><tspan x="316.25" textLength="10.35" lengthAdjust="spacing">e.</tspan><tspan x="330.5" textLength="25.10" lengthAdjust="spacing">Dari</tspan><tspan x="359.5" textLength="32.85" lengthAdjust="spacing">ruang</tspan><tspan x="396.25" textLength="41.60" lengthAdjust="spacing">lingkup</tspan><tspan x="441.75" textLength="74.50" lengthAdjust="spacing">pengujiannya</tspan></text>
<text y="470" font-size="13"><tspan x="316.5" textLength="10.85" lengthAdjust="spacing">2.</tspan><tspan x="331.25" textLength="46.04" lengthAdjust="spacing">Definisi</tspan><tspan x="382" textLength="39.85" lengthAdjust="spacing">konsep</tspan><tspan x="425.75" textLength="21.10" lengthAdjust="spacing">dan</tspan><tspan x="450.75" textLength="70.35" lengthAdjust="spacing">Operasional</tspan><tspan x="525" textLength="47.60" lengthAdjust="spacing">Variabel</tspan></text>
<text y="500" font-size="12"><tspan x="316.5" textLength="42.40" lengthAdjust="spacing">Definisi</tspan><tspan x="362.5" textLength="36.90" lengthAdjust="spacing">konsep</tspan><tspan x="403" textLength="35.40" lengthAdjust="spacing">adalah</tspan><tspan x="442" textLength="58.15" lengthAdjust="spacing">konseptual</tspan><tspan x="503.75" textLength="40.15" lengthAdjust="spacing">tentang</tspan><tspan x="547.5" textLength="44.50" lengthAdjust="spacing">variable</tspan><tspan x="595.6" textLength="52.30" lengthAdjust="spacing">penelitian</tspan><tspan x="651.5" textLength="56.10" lengthAdjust="spacing">sedangkan</tspan><tspan x="711.2" textLength="40.10" lengthAdjust="spacing">definisi</tspan></text>
<text y="515.5" font-size="12"><tspan x="316.5" textLength="60.40" lengthAdjust="spacing">operasional</tspan><tspan x="380.5" textLength="43.40" lengthAdjust="spacing">variabel</tspan><tspan x="427.5" textLength="24.40" lengthAdjust="spacing">yang</tspan><tspan x="455.5" textLength="30.98" lengthAdjust="spacing">berisi</tspan><tspan x="491.25" textLength="55.15" lengthAdjust="spacing">penjelasan</tspan><tspan x="550" textLength="36.65" lengthAdjust="spacing">secara</tspan><tspan x="590.25" textLength="57.15" lengthAdjust="spacing">sistematik</tspan><tspan x="651" textLength="18.63" lengthAdjust="spacing">dan</tspan><tspan x="673.2" textLength="61.70" lengthAdjust="spacing">operasional</tspan><tspan x="738.5" textLength="40.90" lengthAdjust="spacing">tentang</tspan></text>
<text y="531.25" font-size="12"><tspan x="316.5" textLength="56.15" lengthAdjust="spacing">bagaimana</tspan><tspan x="376.25" textLength="51.40" lengthAdjust="spacing">mengukur</tspan><tspan x="431.25" textLength="43.15" lengthAdjust="spacing">variabel</tspan><tspan x="478" textLength="55.00" lengthAdjust="spacing">penelitian.</tspan></text>
<text y="548.25" font-size="13"><tspan x="316.5" textLength="10.85" lengthAdjust="spacing">3.</tspan><tspan x="331.25" textLength="47.35" lengthAdjust="spacing">Populasi</tspan><tspan x="382.5" textLength="20.60" lengthAdjust="spacing">dan</tspan><tspan x="407" textLength="39.85" lengthAdjust="spacing">sampel</tspan><tspan x="450.75" textLength="56.75" lengthAdjust="spacing">penelitian</tspan></text>
<text y="578.6" font-size="13"><tspan x="316.5" textLength="49.88" lengthAdjust="spacing">Populasi</tspan><tspan x="371.25" textLength="39.05" lengthAdjust="spacing">adalah</tspan><tspan x="417.5" textLength="70.83" lengthAdjust="spacing">keseluruhan</tspan><tspan x="491.25" textLength="21.69" lengthAdjust="spacing">dari</tspan><tspan x="525" textLength="37.58" lengthAdjust="spacing">subjek</tspan><tspan x="574.2" textLength="55.66" lengthAdjust="spacing">penelitian</tspan><tspan x="639" textLength="28.20" lengthAdjust="spacing">yang</tspan><tspan x="672.4" textLength="28.20" lengthAdjust="spacing">akan</tspan><tspan x="707.2" textLength="36.86" lengthAdjust="spacing">diteliti,</tspan><tspan x="755.4" textLength="59.17" lengthAdjust="spacing">sedangkan</tspan></text>
<polyline points="548.10 500.7 549.35 502.3 550.60 500.7 551.85 502.3 553.10 500.7 554.35 502.3 555.60 500.7 556.85 502.3 558.10 500.7 559.35 502.3 560.60 500.7 561.85 502.3 563.10 500.7 564.35 502.3 565.60 500.7 566.85 502.3 568.10 500.7 569.35 502.3 570.60 500.7 571.85 502.3 573.10 500.7 574.35 502.3 575.60 500.7 576.85 502.3 578.10 500.7 579.35 502.3 580.60 500.7 581.85 502.3 583.10 500.7 584.35 502.3 585.60 500.7 586.85 502.3 588.10 500.7 589.35 502.3 590.60 500.7" fill="none" stroke="#e8383d" stroke-width="1.1"/>
</svg>

<div class="abs" style="left:876.5px;top:304px;width:32px;height:32px;border-radius:50%;background:#fff;box-shadow:0 1px 3px rgba(60,64,67,.3),0 0 1px rgba(60,64,67,.15)"></div>
<svg class="abs" style="left:886.5px;top:314px" width="13" height="13" viewBox="0 0 13 13"><path d="M1 0 H12 Q13 0 13 1 V13 L10.4 10.4 H1 Q0 10.4 0 9.4 V1 Q0 0 1 0Z" fill="#757575"/><path d="M6.5 2.2 V8.2 M3.5 5.2 H9.5" stroke="#fff" stroke-width="1.5"/></svg>
<div class="abs" style="left:969.5px;top:327px;width:6.5px;height:55px;border-radius:3.5px;background:#dadce0"></div>
<div class="abs" style="left:936.5px;top:539px;width:30px;height:30px;border-radius:3px;background:#f8f9fa;border:1px solid #e3e4e6"></div>
<svg class="abs" style="left:944px;top:546px" width="15" height="17" viewBox="0 0 15 17"><path d="M1.2 0 H13.8 Q15 0 15 1.2 V12.8 Q15 14 13.8 14 H10 L7.5 16.6 L5 14 H1.2 Q0 14 0 12.8 V1.2 Q0 0 1.2 0Z" fill="#757575"/><path d="M7.5 2.6 Q8.1 6.4 11.9 7 Q8.1 7.6 7.5 11.4 Q6.9 7.6 3.1 7 Q6.9 6.4 7.5 2.6Z" fill="#fff"/></svg>
<svg class="abs" style="left:998.5px;top:548px" width="7" height="9" viewBox="0 0 7 9"><path d="M1.2 0.8 L5.4 4.5 L1.2 8.2" fill="none" stroke="#5f6368" stroke-width="1.4"/></svg>
<svg class="abs" style="left:996px;top:150px" width="13" height="13" viewBox="0 0 13 13"><rect x="0" y="1.5" width="13" height="11.5" rx="1" fill="#4285f4"/><rect x="1.5" y="0" width="10" height="2.5" fill="#bdc1c6"/><text x="6.5" y="10.8" font-size="8" fill="#fff" text-anchor="middle" font-family="Liberation Sans">31</text></svg>
<svg class="abs" style="left:996px;top:195px" width="13" height="13" viewBox="0 0 13 13"><path d="M1 0 H12 Q13 0 13 1 V9.5 L9.5 13 H1 Q0 13 0 12 V1 Q0 0 1 0Z" fill="#f4b400"/><path d="M9.5 13 V9.5 H13Z" fill="#fbe29a"/><circle cx="6.5" cy="5.3" r="2.3" fill="none" stroke="#fff" stroke-width="0.9"/><rect x="5.4" y="8" width="2.2" height="1.8" fill="#fff"/></svg>
<svg class="abs" style="left:994.7px;top:238.2px" width="16" height="16" viewBox="0 0 16 16"><circle cx="8" cy="8" r="7.6" fill="#4285f4"/><path d="M6.2 10.8 L12 4.6" stroke="#fff" stroke-width="2.2" stroke-linecap="round"/><circle cx="3.9" cy="8.4" r="1.2" fill="#fbbc05"/></svg>

<svg class="abs" style="left:566px;top:159px" width="11" height="4" viewBox="0 0 11 4"><path d="M0 4 L5.5 0 L11 4Z" fill="#232323"/></svg>
<div class="abs" style="left:524.1px;top:162.6px;width:92.7px;height:22px;background:#232323;border-radius:1px"></div>
<div class="abs" style="left:531.5px;top:167.5px;font-size:8.9px;line-height:12px;font-weight:bold;color:#fff;white-space:nowrap">Insert link (Ctrl+K)</div>
<div class="abs" style="left:0;top:574.8px;width:1024px;height:2px;background:#111"></div>

</div>
</body>
</html>
